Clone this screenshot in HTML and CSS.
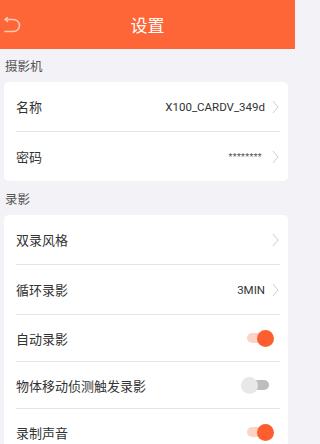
FILE: index.html
```html
<!DOCTYPE html>
<html lang="zh">
<head>
<meta charset="utf-8">
<link rel="stylesheet" href="styles.css">
</head>
<body>
<header class="topbar">
  <span class="back">
    <svg width="18" height="17" viewBox="0 0 18 17"><path d="M2 2.5 H10.5 A6 6 0 0 1 10.5 14.5 H2 M2 2.5 L4.5 0.5 M2 2.5 L4.5 4.5" fill="none" stroke="#f9cbb3" stroke-width="1.6" stroke-linecap="round" stroke-linejoin="round"/></svg>
  </span>
  <h1 class="title">设置</h1>
  <span></span>
</header>

<div class="section-label">摄影机</div>
<div class="card">
  <div class="row nav">
    <span class="label">名称</span>
    <span class="value">X100_CARDV_349d</span>
    <svg class="chev" width="7" height="14" viewBox="0 0 7 14"><polyline points="1,1 6,7 1,13" fill="none" stroke="#cfcfcf" stroke-width="1"/></svg>
  </div>
  <div class="row nav">
    <span class="label">密码</span>
    <span class="value small">********</span>
    <svg class="chev" width="7" height="14" viewBox="0 0 7 14"><polyline points="1,1 6,7 1,13" fill="none" stroke="#cfcfcf" stroke-width="1"/></svg>
  </div>
</div>

<div class="section-label tall">录影</div>
<div class="card">
  <div class="row nav">
    <span class="label">双录风格</span>
    <span class="value"></span>
    <svg class="chev" width="7" height="14" viewBox="0 0 7 14"><polyline points="1,1 6,7 1,13" fill="none" stroke="#cfcfcf" stroke-width="1"/></svg>
  </div>
  <div class="row nav">
    <span class="label">循环录影</span>
    <span class="value">3MIN</span>
    <svg class="chev" width="7" height="14" viewBox="0 0 7 14"><polyline points="1,1 6,7 1,13" fill="none" stroke="#cfcfcf" stroke-width="1"/></svg>
  </div>
  <div class="row sw">
    <span class="label">自动录影</span>
    <span class="toggle on"></span>
  </div>
  <div class="row sw">
    <span class="label">物体移动侦测触发录影</span>
    <span class="toggle"></span>
  </div>
  <div class="row sw">
    <span class="label">录制声音</span>
    <span class="toggle on"></span>
  </div>
</div>
</body>
</html>
```

FILE: styles.css
```css
* { box-sizing: border-box; }
html, body {
  margin: 0;
  padding: 0;
  background: #f3f3f7;
  font-family: Roboto, "Noto Sans CJK SC", sans-serif;
  color: #333;
}
body { width: 295px; overflow: hidden; }

.topbar {
  height: 49px;
  background: #fe6537;
  display: grid;
  grid-template-columns: 40px 1fr 40px;
  align-items: center;
}
.back {
  display: flex;
  align-items: center;
  padding-left: 3px;
  padding-top: 1px;
}
.title {
  margin: 0;
  text-align: center;
  color: #fff;
  font-size: 17px;
  font-weight: 400;
  font-family: "Noto Sans CJK SC", sans-serif;
}

.section-label {
  height: 33px;
  display: flex;
  align-items: center;
  padding-left: 5px;
  font-size: 12.5px;
  color: #555;
  font-family: "Noto Sans CJK SC", sans-serif;
}
.section-label.tall { height: 34px; padding-top: 1px; }

.card {
  margin: 0 7px 0 4px;
  background: #fff;
  border-radius: 5px;
  padding: 0 8px 0 12px;
}

.row {
  display: flex;
  align-items: center;
  border-top: 1px solid #e4e4e6;
}
.row:first-child { border-top: none; }
.row.nav { height: 50px; }
.row.nav:first-child { height: 49px; }
.row.sw { height: 47px; padding-right: 6px; }

.label {
  flex: 1;
  font-size: 13px;
  color: #333;
  font-family: "Noto Sans CJK SC", sans-serif;
}
.value {
  font-size: 11.5px;
  color: #333;
  margin-right: 7px;
}
.value.small { font-size: 9px; letter-spacing: 0.3px; color: #555; margin-right: 10px; }
.chev { display: block; margin-right: 1px; }

.toggle {
  position: relative;
  width: 33px;
  height: 17px;
  display: block;
}
.toggle::before {
  content: "";
  position: absolute;
  left: 4px;
  right: 5px;
  top: 3.5px;
  height: 10px;
  border-radius: 5px;
  background: #bdbdbd;
}
.toggle::after {
  content: "";
  position: absolute;
  top: 0;
  left: 0;
  width: 17px;
  height: 17px;
  border-radius: 50%;
  background: #e8e8e8;
}
.toggle.on::before { background: #fcd4c5; left: 6px; right: 4px; }
.toggle.on::after { left: auto; right: 0; background: #fd5e2f; }
```
